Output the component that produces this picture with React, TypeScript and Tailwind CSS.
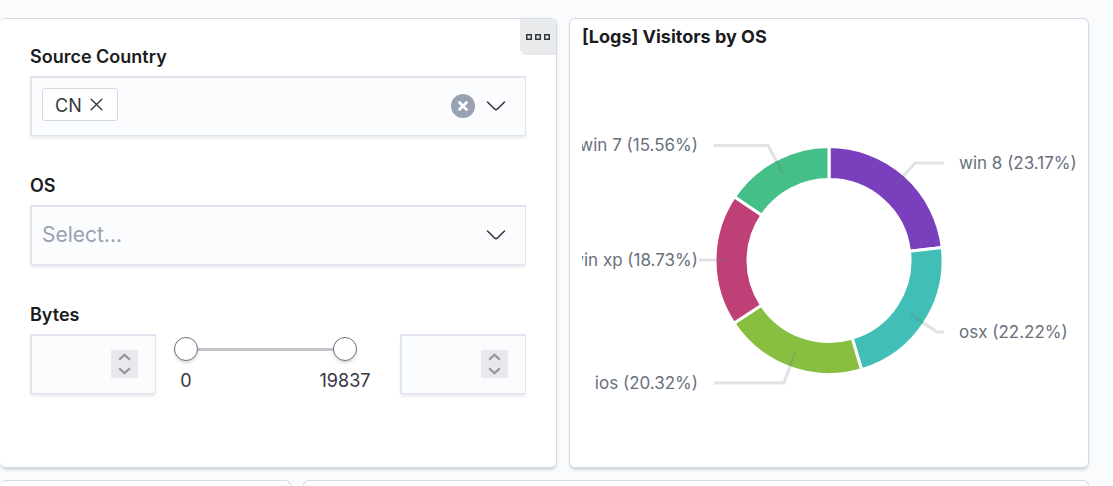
import { useState } from "react";
import type { ReactNode } from "react";

const FIELD =
  "flex h-[60px] items-center border-t-2 border-r border-b border-l-2 border-[#e0e4ee] bg-[#fbfcfe] pb-0.5 shadow-[0_3px_3px_-1px_rgba(152,162,179,0.25)]";
const PANEL =
  "rounded-md border border-[#d3dae6] bg-white shadow-[0_3px_3px_-1px_rgba(152,162,179,0.35),0_1px_5px_-2px_rgba(152,162,179,0.3)]";
const RANGE =
  "pointer-events-none absolute inset-0 m-0 h-6 w-full appearance-none bg-transparent [&::-webkit-slider-thumb]:pointer-events-auto [&::-webkit-slider-thumb]:h-6 [&::-webkit-slider-thumb]:w-6 [&::-webkit-slider-thumb]:appearance-none [&::-webkit-slider-thumb]:rounded-full [&::-webkit-slider-thumb]:border [&::-webkit-slider-thumb]:border-solid [&::-webkit-slider-thumb]:border-[#69707d] [&::-webkit-slider-thumb]:bg-white [&::-webkit-slider-thumb]:shadow-[0_2px_3px_rgba(105,112,125,0.25)]";

const MAX_BYTES = 19837;

function Field({ id, label, children }: { id: string; label: string; children: ReactNode }) {
  return (
    <div>
      <label htmlFor={id} className="mb-1.5 block text-lg leading-[27px] font-semibold text-[#1a1c21]">
        {label}
      </label>
      {children}
    </div>
  );
}

function ArrowDown() {
  return (
    <svg width="20" height="12" viewBox="0 0 20 12" fill="none" stroke="#343741" strokeWidth="1.6" strokeLinecap="round" strokeLinejoin="round" aria-hidden="true">
      <path d="M1.5 2 L8.8 9.2 Q10 10.2 11.2 9.2 L18.5 2" />
    </svg>
  );
}

function NumberBox({ id, label }: { id: string; label: string }) {
  const [value, setValue] = useState("");
  const step = (delta: number) =>
    setValue((v) => String(Math.min(MAX_BYTES, Math.max(0, Number(v || 0) + delta))));
  return (
    <div className={`${FIELD} w-[126px] shrink-0 pr-[17px] pl-2.5`}>
      <input
        id={id}
        type="number"
        aria-label={label}
        value={value}
        onChange={(e) => setValue(e.target.value)}
        className="min-w-0 flex-1 appearance-none bg-transparent text-lg outline-none [appearance:textfield] [&::-webkit-inner-spin-button]:appearance-none"
      />
      <span className="flex h-7 w-[27px] flex-col bg-[#e9e8ec]">
        <button type="button" aria-label={`Increase ${label}`} onClick={() => step(1)} className="flex flex-1 items-center justify-center">
          <svg width="13" height="8" viewBox="0 0 13 8" fill="none" stroke="#9594a2" strokeWidth="2.2" aria-hidden="true">
            <path d="M1.2 6.8 L6.5 1.8 L11.8 6.8" />
          </svg>
        </button>
        <button type="button" aria-label={`Decrease ${label}`} onClick={() => step(-1)} className="flex flex-1 items-center justify-center">
          <svg width="13" height="8" viewBox="0 0 13 8" fill="none" stroke="#9594a2" strokeWidth="2.2" aria-hidden="true">
            <path d="M1.2 1.2 L6.5 6.2 L11.8 1.2" />
          </svg>
        </button>
      </span>
    </div>
  );
}

function ByteRange() {
  const [low, setLow] = useState(0);
  const [high, setHigh] = useState(MAX_BYTES);
  return (
    <div className="flex items-start gap-[18px]">
      <NumberBox id="bytes" label="Minimum bytes" />
      <div className="min-w-0 flex-1 pt-[3px] pr-[25px]">
        <div className="relative flex h-6 items-center px-3">
          <div className="h-[3px] w-full bg-[#c2c6ca]" />
          <input type="range" aria-label="Lower bound" min={0} max={MAX_BYTES} value={low} onChange={(e) => setLow(Math.min(high, Number(e.target.value)))} className={RANGE} />
          <input type="range" aria-label="Upper bound" min={0} max={MAX_BYTES} value={high} onChange={(e) => setHigh(Math.max(low, Number(e.target.value)))} className={RANGE} />
        </div>
        <div className="mt-1.5 flex justify-between text-lg leading-7 text-[#343741]">
          <span className="flex w-6 justify-center">0</span>
          <span className="flex w-6 justify-center">{MAX_BYTES}</span>
        </div>
      </div>
      <NumberBox id="bytes-max" label="Maximum bytes" />
    </div>
  );
}

const CX = 247;
const CY = 205.5;
const OUTER = 114;
const INNER = 81;

type Slice = {
  name: string;
  share: number;
  color: string;
  leader: string;
  x: number;
  y: number;
  anchor: "start" | "end";
};

const slices: Slice[] = [
  { name: "win 8", share: 23.17, color: "#7a3fbd", leader: "M312 132 L333 108 H362", x: 377, y: 114, anchor: "start" },
  { name: "osx", share: 22.22, color: "#41bfb7", leader: "M328 259 L355 277 H362", x: 377, y: 283, anchor: "start" },
  { name: "ios", share: 20.32, color: "#88bf41", leader: "M213 297 L202 328 H132", x: 116, y: 334, anchor: "end" },
  { name: "win xp", share: 18.73, color: "#bf4077", leader: "M149 205 H117", x: 116, y: 211, anchor: "end" },
  { name: "win 7", share: 15.56, color: "#43bf87", leader: "M201 118 L186 90.5 H132", x: 116, y: 96, anchor: "end" },
];

function point(r: number, share: number) {
  const a = (share / 100) * 2 * Math.PI;
  return `${(CX + r * Math.sin(a)).toFixed(2)} ${(CY - r * Math.cos(a)).toFixed(2)}`;
}

function Donut() {
  let total = 0;
  return (
    <svg viewBox="0 0 494 400" className="block w-full" role="img" aria-label="Visitors by OS">
      {slices.map((s) => {
        const from = total;
        total += s.share;
        const d = `M${point(OUTER, from)} A${OUTER} ${OUTER} 0 0 1 ${point(OUTER, total)} L${point(INNER, total)} A${INNER} ${INNER} 0 0 0 ${point(INNER, from)} Z`;
        return <path key={s.name} d={d} fill={s.color} stroke="#fff" strokeWidth="3" />;
      })}
      {slices.map((s) => (
        <g key={s.name}>
          <path d={s.leader} fill="none" stroke="#69707d" strokeOpacity="0.2" strokeWidth="3" />
          <text x={s.x} y={s.y} textAnchor={s.anchor} fontSize="17" fill="#69707d">
            {`${s.name} (${s.share}%)`}
          </text>
        </g>
      ))}
    </svg>
  );
}

function Controls() {
  const [countries, setCountries] = useState(["CN"]);
  return (
    <section className={`${PANEL} relative border-l-0 px-[30px] pt-6`}>
      <button type="button" aria-label="Panel options" className="absolute top-0 right-0 flex h-9 w-9 items-center justify-center rounded-tr-md rounded-bl-md bg-[#e9eaec]">
        <svg width="24" height="6" viewBox="0 0 24 6" fill="none" stroke="#343741" strokeWidth="1.5" aria-hidden="true">
          <rect x="0.75" y="0.75" width="4.5" height="4.5" />
          <rect x="9.75" y="0.75" width="4.5" height="4.5" />
          <rect x="18.75" y="0.75" width="4.5" height="4.5" />
        </svg>
      </button>
      <div className="flex flex-col gap-9">
        <Field id="country" label="Source Country">
          <div className={`${FIELD} pr-[19px] pl-2.5`}>
            {countries.map((c) => (
              <span key={c} className="mb-0.5 flex h-[33px] items-center gap-2 rounded-[3px] border border-[#d3dae6] bg-white px-3 text-lg text-[#343741]">
                <span className="pt-0.5">{c}</span>
                <button type="button" aria-label={`Remove ${c}`} onClick={() => setCountries([])} className="mr-0.5">
                  <svg width="13" height="13" viewBox="0 0 13 13" stroke="#343741" strokeWidth="1.4" strokeLinecap="round" aria-hidden="true">
                    <path d="M1.2 1.2 L11.8 11.8 M11.8 1.2 L1.2 11.8" />
                  </svg>
                </button>
              </span>
            ))}
            <input id="country" type="text" className="min-w-0 flex-1 bg-transparent px-2 text-lg outline-none" />
            <button type="button" aria-label="Clear selection" onClick={() => setCountries([])} className="mr-[11px]">
              <svg width="24" height="24" viewBox="0 0 24 24" aria-hidden="true">
                <circle cx="12" cy="12" r="12" fill="#98a2b3" />
                <path d="M8.5 8.5 L15.5 15.5 M15.5 8.5 L8.5 15.5" stroke="#fff" strokeWidth="2.6" strokeLinecap="round" />
              </svg>
            </button>
            <button type="button" aria-label="Open list">
              <ArrowDown />
            </button>
          </div>
        </Field>
        <Field id="os" label="OS">
          <div className={`${FIELD} relative`}>
            <select id="os" defaultValue="" className="h-full w-full appearance-none bg-transparent pr-12 pl-2.5 text-[21px] text-[#98a2b3] outline-none">
              <option value="">Select...</option>
              {slices.map((s) => (
                <option key={s.name}>{s.name}</option>
              ))}
            </select>
            <span className="pointer-events-none absolute right-[19px]">
              <ArrowDown />
            </span>
          </div>
        </Field>
        <Field id="bytes" label="Bytes">
          <ByteRange />
        </Field>
      </div>
    </section>
  );
}

export default function App() {
  return (
    <main className="flex h-screen flex-col gap-3 overflow-hidden bg-[#fafbfd] pt-[18px] pr-6 font-['Inter',sans-serif]">
      <div className="grid shrink-0 grid-cols-[557fr_520fr] gap-3">
        <Controls />
        <section className={`${PANEL} px-3 pb-3`}>
          <h2 className="text-lg leading-9 font-bold text-[#1a1c21]">[Logs] Visitors by OS</h2>
          <Donut />
        </section>
      </div>
      <div className="grid flex-1 grid-cols-[291fr_786fr] gap-3">
        <section className="rounded-t-md border border-b-0 border-l-0 border-[#d3dae6] bg-white" />
        <section className="rounded-t-md border border-b-0 border-[#d3dae6] bg-white" />
      </div>
    </main>
  );
}
